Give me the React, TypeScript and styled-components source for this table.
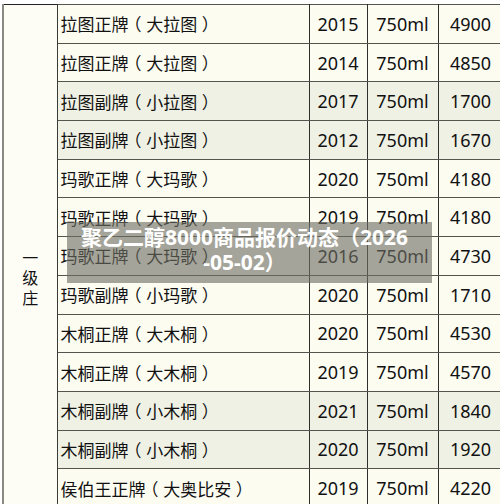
import React from "react";
import styled, { createGlobalStyle } from "styled-components";

const GlobalStyle = createGlobalStyle`
  html, body {
    margin: 0;
    padding: 0;
    background: #ffffff;
    overflow: hidden;
  }
`;

const Page = styled.div`
  position: relative;
  width: 500px;
  height: 504px;
  overflow: hidden;
  padding-top: 4px;
  box-sizing: border-box;
`;

const PriceTable = styled.table`
  border-collapse: collapse;
  margin-left: 2px;
  width: 500px;
  table-layout: fixed;
  font-family: "Noto Sans", "Noto Sans CJK SC", sans-serif;
  color: #111;
`;

const Col = styled.col<{ $w: number }>`
  width: ${(p) => p.$w}px;
`;

const Row = styled.tr<{ $tint: boolean }>`
  height: 38.7px;
  background: ${(p) => (p.$tint ? "#f0f1e5" : "#fcfcf1")};
`;

const GroupCell = styled.td`
  border-left: 2px solid #8a8a82;
  border-right: 1px solid #3a3a36;
  border-top: 1px solid #222;
  background: #fdfdf6;
  text-align: center;
  vertical-align: middle;
  padding: 42px 0 0;
  font-family: "Noto Sans CJK SC", sans-serif;
  font-size: 16px;
  line-height: 20px;
`;

const NameCell = styled.td`
  border-top: 1px solid #55554f;
  border-bottom: 1px solid #55554f;
  border-right: 1px solid #2f2f2c;
  padding: 0 0 0 3px;
  font-family: "Noto Sans CJK SC", sans-serif;
  font-size: 17px;
  white-space: nowrap;
  overflow: hidden;
`;

const Paren = styled.span`
  font-feature-settings: "halt";
  padding: 0 0.27em;
`;

const NumCell = styled.td`
  border-top: 1px solid #55554f;
  border-bottom: 1px solid #55554f;
  border-right: 1px solid #2f2f2c;
  text-align: center;
  font-size: 18px;
  padding: 0;
  white-space: nowrap;
`;

const Banner = styled.div`
  position: absolute;
  left: 67px;
  top: 222px;
  width: 365px;
  height: 61px;
  box-sizing: border-box;
  padding: 3px 12px 0 2px;
  background: rgba(110, 110, 100, 0.62);
  color: #ffffff;
  font-family: "Noto Sans", "Noto Sans CJK SC", sans-serif;
  font-weight: 700;
  font-size: 21px;
  line-height: 25px;
  text-align: center;
`;

const rows = [
  ["拉图正牌", "大拉图", "2015", "750ml", "4900"],
  ["拉图正牌", "大拉图", "2014", "750ml", "4850"],
  ["拉图副牌", "小拉图", "2017", "750ml", "1700"],
  ["拉图副牌", "小拉图", "2012", "750ml", "1670"],
  ["玛歌正牌", "大玛歌", "2020", "750ml", "4180"],
  ["玛歌正牌", "大玛歌", "2019", "750ml", "4180"],
  ["玛歌正牌", "大玛歌", "2016", "750ml", "4730"],
  ["玛歌副牌", "小玛歌", "2020", "750ml", "1710"],
  ["木桐正牌", "大木桐", "2020", "750ml", "4530"],
  ["木桐正牌", "大木桐", "2019", "750ml", "4570"],
  ["木桐副牌", "小木桐", "2021", "750ml", "1840"],
  ["木桐副牌", "小木桐", "2020", "750ml", "1920"],
  ["侯伯王正牌", "大奥比安", "2019", "750ml", "4220"],
];

const tinted = new Set([2, 3, 10, 11]);
const widths = [54, 252, 58, 71, 65];

export default function App() {
  return (
    <>
      <GlobalStyle />
      <Page>
        <PriceTable>
          <colgroup>
            {widths.map((w, i) => (
              <Col key={i} $w={w} />
            ))}
          </colgroup>
          <tbody>
            {rows.map(([name, alias, year, vol, price], i) => (
              <Row key={i} $tint={tinted.has(i)}>
                {i === 0 && (
                  <GroupCell rowSpan={rows.length}>
                    一<br />级<br />庄
                  </GroupCell>
                )}
                <NameCell>
                  {name}
                  <Paren>（</Paren>
                  {alias}
                  <Paren>）</Paren>
                </NameCell>
                <NumCell>{year}</NumCell>
                <NumCell>{vol}</NumCell>
                <NumCell>{price}</NumCell>
              </Row>
            ))}
          </tbody>
        </PriceTable>
        <Banner>
          聚乙二醇8000商品报价动态（2026
          <br />
          -05-02）
        </Banner>
      </Page>
    </>
  );
}
